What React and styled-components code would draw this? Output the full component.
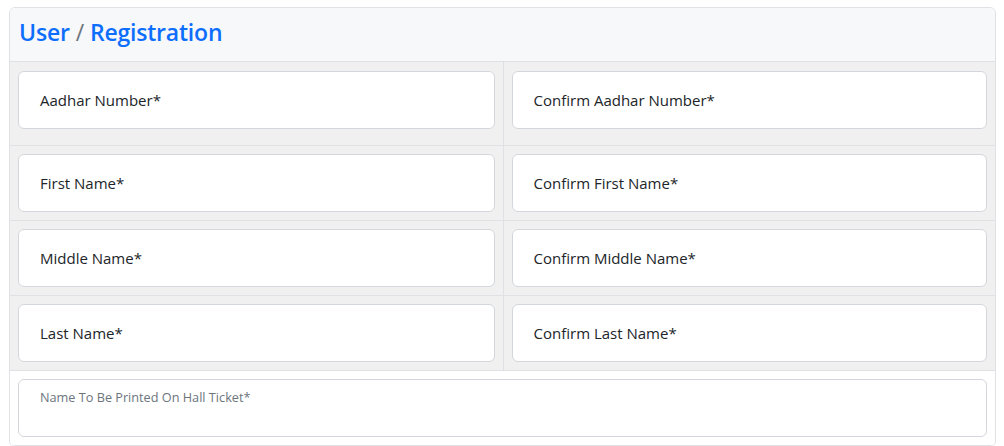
import * as React from 'react'
import styled, { createGlobalStyle } from 'styled-components'

const GlobalStyle = createGlobalStyle`
    body {
        margin: 0;
        background: #fff;
        font-family: 'Open Sans', 'Noto Sans', sans-serif;
        color: #212529;
    }
    * {
        box-sizing: border-box;
    }
`
const Card = styled.div`
    margin: 7px 8px 0 9px;
    border: 1px solid #dfe1e5;
    border-radius: 6px;
    overflow: hidden;
`
const CardHeader = styled.div`
    height: 54px;
    display: flex;
    align-items: center;
    padding: 0 9px 6px;
    background: #f7f8fa;
    border-bottom: 1px solid #dfe1e5;
`
const Title = styled.h4`
    margin: 0;
    font-size: 23px;
    font-weight: 600;
    color: #0d6efd;
    letter-spacing: -0.2px;
`
const Slash = styled.span`
    color: #6c757d;
    font-weight: 400;
    margin: 0 6px;
`
const Row = styled.div`
    display: grid;
    grid-template-columns: ${(props) => (props.$wide ? '1fr' : '1fr 1fr')};
    background: ${(props) => (props.$white ? '#fff' : '#f0f0f0')};
    border-bottom: 1px solid #dfe1e5;
`
const Cell = styled.div`
    padding: ${(props) => (props.$first ? '9px 8px 16px' : '8px')};
    & + & {
        border-left: 1px solid #dfe1e5;
    }
`
const Field = styled.div`
    height: 58px;
    background: #fff;
    border: 1px solid #d3d6da;
    border-radius: 6px;
    display: flex;
    align-items: ${(props) => (props.$top ? 'flex-start' : 'center')};
    padding: ${(props) => (props.$top ? '8px 21px' : '0 21px')};
`
const Label = styled.span`
    font-size: ${(props) => (props.$small ? '12.7px' : '15px')};
    color: ${(props) => (props.$small ? '#6c757d' : '#212529')};
`

const pairs = [
    ['Aadhar Number*', 'Confirm Aadhar Number*'],
    ['First Name*', 'Confirm First Name*'],
    ['Middle Name*', 'Confirm Middle Name*'],
    ['Last Name*', 'Confirm Last Name*'],
]

const App = () => {
    return (
        <>
            <GlobalStyle />
            <Card>
                <CardHeader>
                    <Title>
                        User<Slash>/</Slash>Registration
                    </Title>
                </CardHeader>
                {pairs.map(([left, right], i) => (
                    <Row key={left}>
                        <Cell $first={i === 0}>
                            <Field>
                                <Label>{left}</Label>
                            </Field>
                        </Cell>
                        <Cell $first={i === 0}>
                            <Field>
                                <Label>{right}</Label>
                            </Field>
                        </Cell>
                    </Row>
                ))}
                <Row $wide $white>
                    <Cell>
                        <Field $top>
                            <Label $small>Name To Be Printed On Hall Ticket*</Label>
                        </Field>
                    </Cell>
                </Row>
            </Card>
        </>
    )
}
export default App
